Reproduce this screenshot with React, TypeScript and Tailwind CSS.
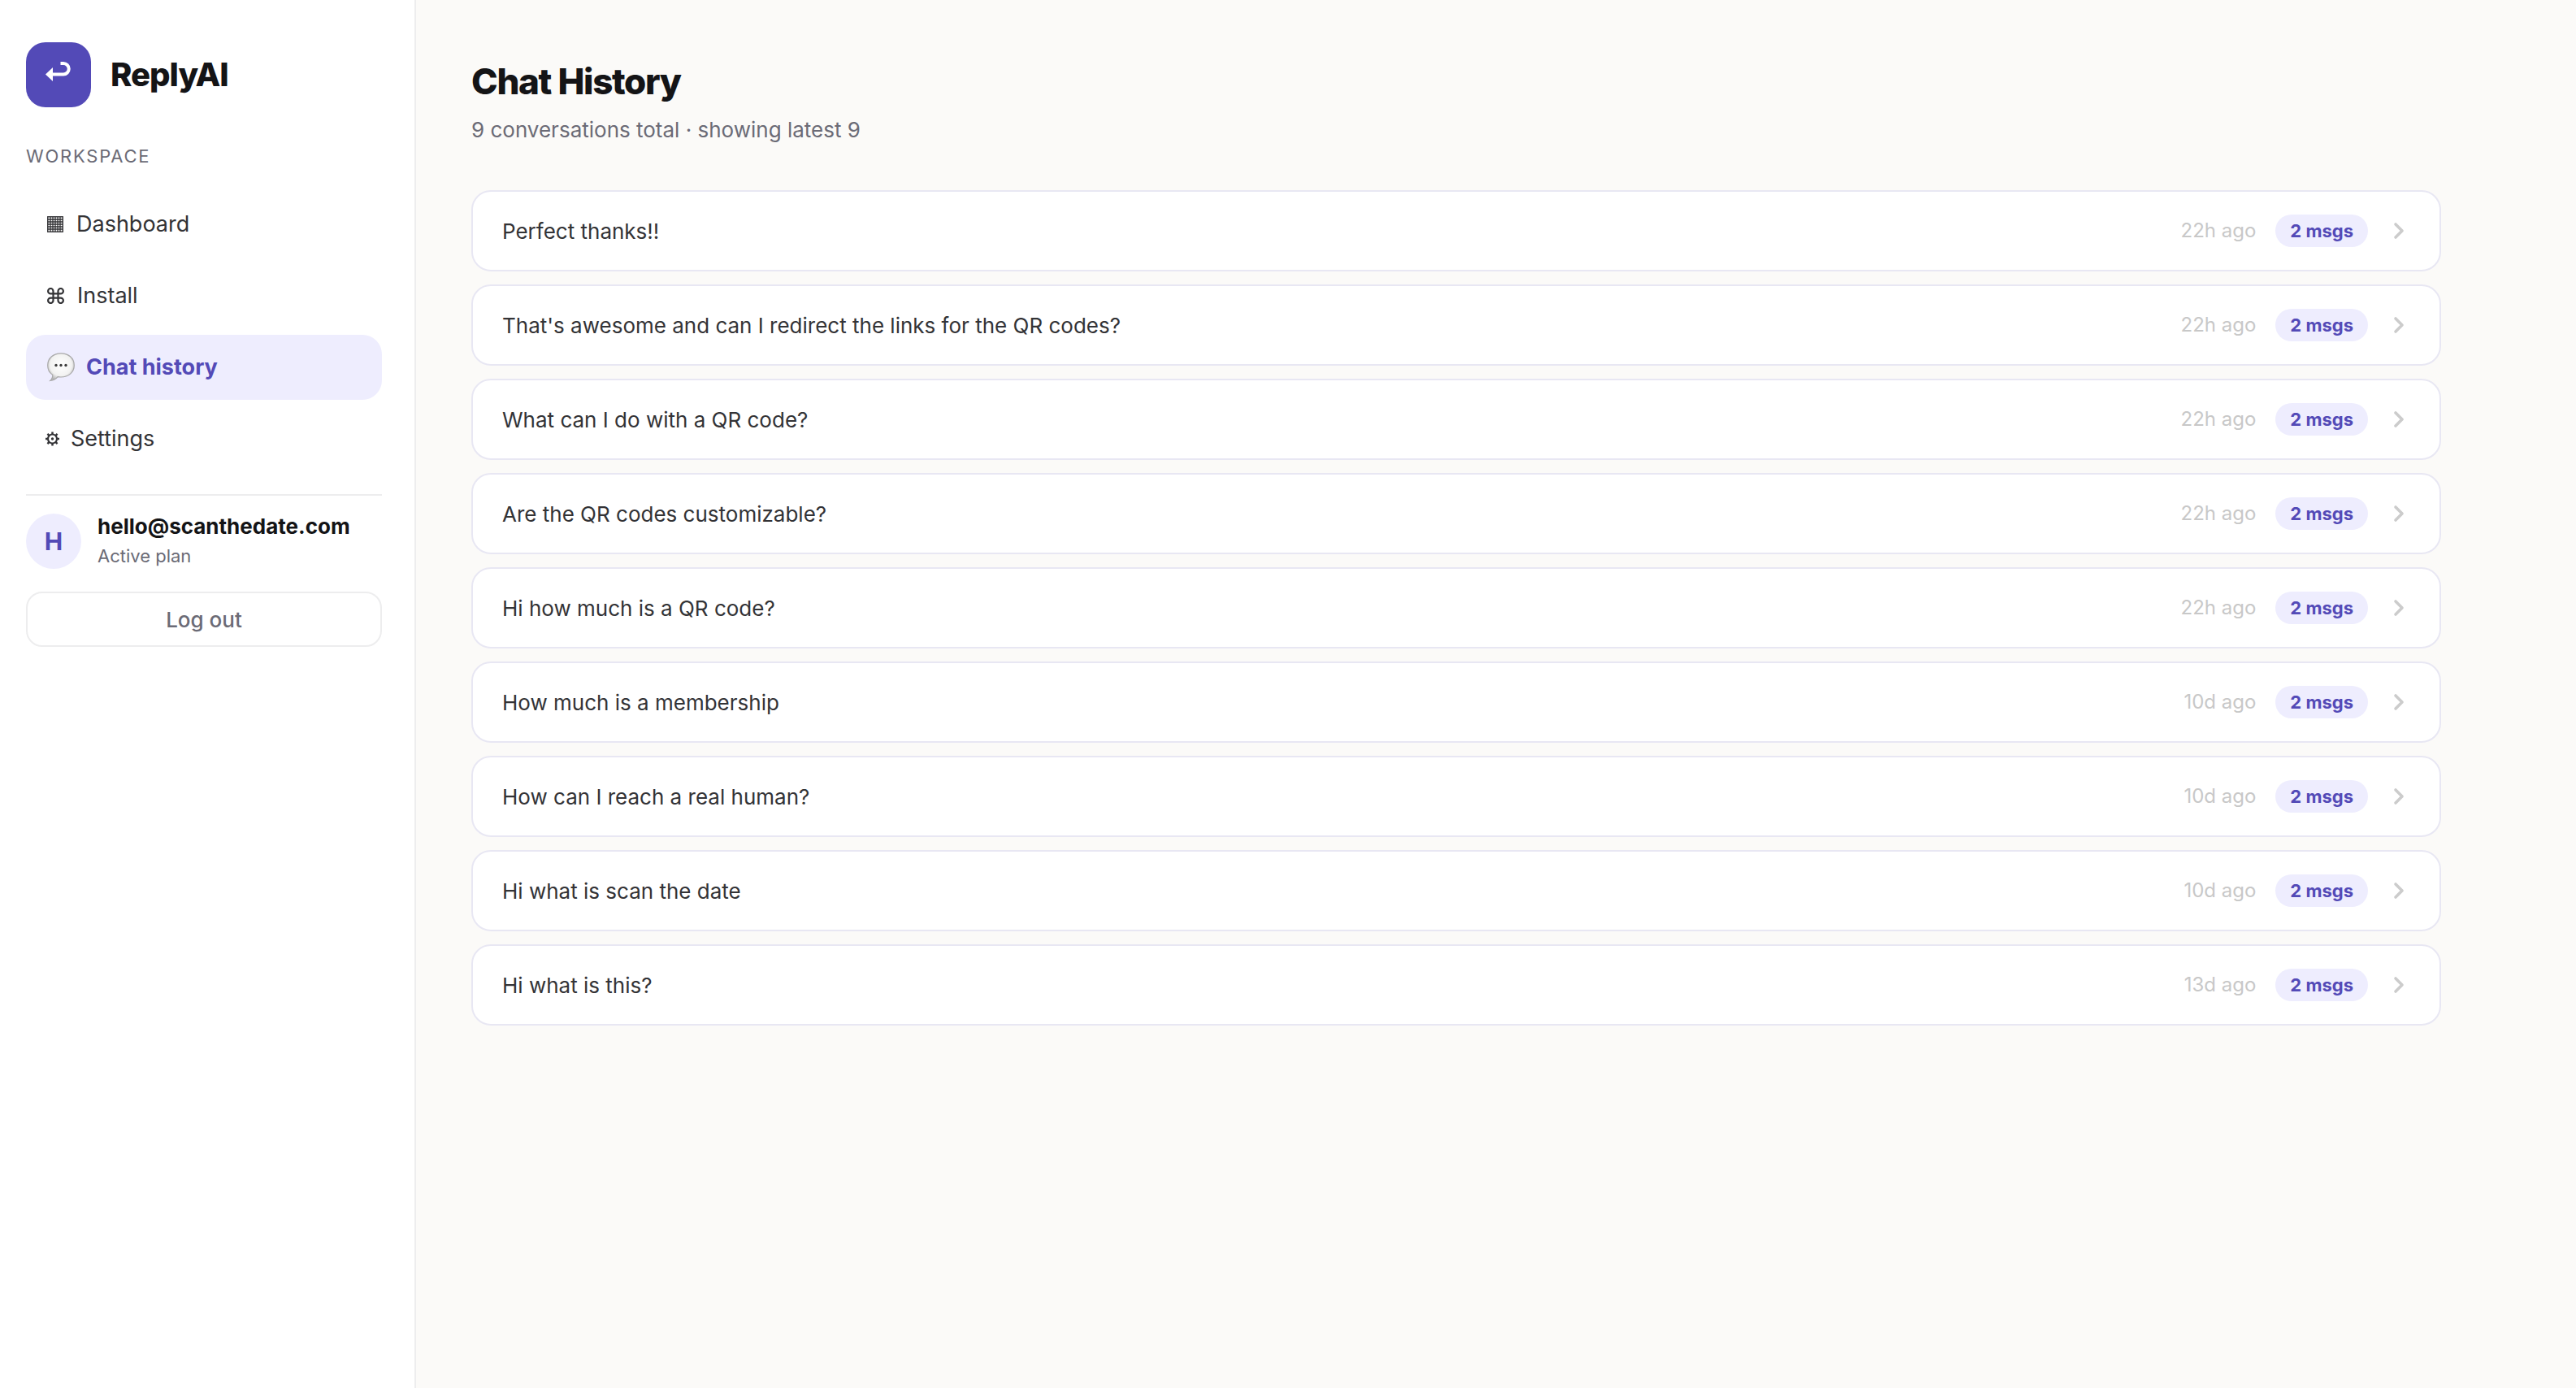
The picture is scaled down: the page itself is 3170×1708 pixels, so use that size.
import React from "react";

const BubbleIcon = () => (
  <svg width="34" height="36" viewBox="0 0 34 36" aria-hidden="true">
    <defs>
      <radialGradient id="bubble" cx="50%" cy="42%" r="58%">
        <stop offset="0%" stopColor="#ffffff" />
        <stop offset="70%" stopColor="#f2f2f1" />
        <stop offset="100%" stopColor="#b4b4b4" />
      </radialGradient>
    </defs>
    <path
      d="M17 .8C8 .8.7 6.600.7 15.500c0 6 2.500 9.500 6 11.700.3 3-.8 5.300-2.900 7.200 4.200-.4 7.200-2.200 9.300-4.800 1.200.3 2.600.4 3.900.4 9 0 16.300-5.600 16.300-14.500S26 .8 17 .8z"
      fill="url(#bubble)"
      stroke="#a9a9a9"
      strokeWidth="1.200"
    />
    <circle cx="11" cy="15.500" r="1.700" fill="#3c3c3c" />
    <circle cx="17" cy="15.500" r="1.700" fill="#3c3c3c" />
    <circle cx="23" cy="15.500" r="1.700" fill="#3c3c3c" />
  </svg>
);

const GridIcon = () => (
  <svg width="20" height="20" viewBox="0 0 20 20" stroke="currentColor" fill="none" aria-hidden="true">
    <rect x=".75" y=".75" width="18.500" height="18.500" strokeWidth="1.400" />
    <path d="M4 1v18M7 1v18M10 1v18M13 1v18M16 1v18M1 4h18M1 7h18M1 10h18M1 13h18M1 16h18" strokeWidth="1.300" />
  </svg>
);

const CommandIcon = () => (
  <svg width="21" height="20" viewBox="0 0 21 20" stroke="currentColor" fill="none" strokeWidth="2.200" aria-hidden="true">
    <path d="M7.500 4.200v11.600a3.200 3.200 0 1 1-3.200-3.200h12.400a3.200 3.200 0 1 1-3.200 3.200V4.200a3.200 3.200 0 1 1 3.200 3.200H4.300a3.200 3.200 0 1 1 3.200-3.200z" />
  </svg>
);

const GearIcon = () => (
  <svg width="17" height="18" viewBox="0 0 18 18" stroke="currentColor" fill="none" aria-hidden="true">
    <circle cx="9" cy="9" r="5.800" strokeWidth="2.200" />
    <circle cx="9" cy="9" r="1.800" fill="currentColor" stroke="none" />
    <path
      d="M9 0v3M9 15v3M0 9h3M15 9h3M2.600 2.600l2.200 2.200M13.200 13.200l2.200 2.200M2.600 15.400l2.200-2.200M13.200 4.800l2.200-2.200"
      strokeWidth="2.600"
    />
  </svg>
);

const navItems = [
  { label: "Dashboard", icon: <GridIcon />, spacing: "gap-4 pl-[26px]" },
  { label: "Install", icon: <CommandIcon />, spacing: "gap-4 pl-[26px]" },
  { label: "Chat history", icon: <BubbleIcon />, spacing: "gap-3.5 pl-[26px]", active: true },
  { label: "Settings", icon: <GearIcon />, spacing: "gap-3.5 pl-6" },
];

const conversations = [
  { text: "Perfect thanks!!", time: "22h ago" },
  { text: "That's awesome and can I redirect the links for the QR codes?", time: "22h ago" },
  { text: "What can I do with a QR code?", time: "22h ago" },
  { text: "Are the QR codes customizable?", time: "22h ago" },
  { text: "Hi how much is a QR code?", time: "22h ago" },
  { text: "How much is a membership", time: "10d ago" },
  { text: "How can I reach a real human?", time: "10d ago" },
  { text: "Hi what is scan the date", time: "10d ago" },
  { text: "Hi what is this?", time: "13d ago" },
];

const Sidebar = () => (
  <aside className="w-[512px] shrink-0 border-r-2 border-[#ededee] bg-white pt-[52px] pr-10 pl-8">
    <div className="flex items-center gap-6">
      <div className="flex size-20 items-center justify-center rounded-3xl bg-[#534ab7] pb-2">
        <svg width="32" height="26" viewBox="0 0 32 26" fill="none" aria-hidden="true">
          <path d="M8 16.500h14a6.750 6.750 0 0 0 0-13.500h-3.500" stroke="#fff" strokeWidth="4" />
          <path d="M0 16.500 9 8v17z" fill="#fff" />
        </svg>
      </div>
      <span className="text-[40px] leading-none font-extrabold tracking-tight text-[#141416]">ReplyAI</span>
    </div>

    <h2 className="mt-[46px] text-[22px] leading-7 tracking-[0.08em] text-[#6b6b76] uppercase">Workspace</h2>

    <nav className="mt-[30px] flex flex-col gap-2">
      {navItems.map((item) => (
        <a
          key={item.label}
          href="#"
          aria-current={item.active ? "page" : undefined}
          className={`flex h-20 items-center rounded-3xl text-[27px] ${item.spacing} ${
            item.active ? "bg-[#eeedfe] font-bold text-[#534ab7]" : "text-[#333336]"
          }`}
        >
          {item.icon}
          {item.label}
        </a>
      ))}
    </nav>

    <div className="mt-7 border-t-2 border-[#ededee] pt-[22px]">
      <div className="flex items-center gap-5">
        <div className="flex size-[68px] items-center justify-center rounded-full bg-[#eeedfe] text-[30px] font-bold text-[#534ab7]">
          H
        </div>
        <div>
          <p className="text-[26px] leading-8 font-bold text-[#141416]">hello@scanthedate.com</p>
          <p className="mt-1 text-[22px] leading-8 text-[#6b6b76]">Active plan</p>
        </div>
      </div>
      <button className="mt-7 h-[68px] w-full rounded-[20px] border-2 border-[#ededee] bg-white text-[26px] font-medium text-[#6b6b76]">
        Log out
      </button>
    </div>
  </aside>
);

const App = () => {
  return (
    <div className="flex min-h-screen bg-[#fbfaf8] font-['Inter','Liberation_Sans',sans-serif]">
      <Sidebar />
      <main className="max-w-[2560px] min-w-0 flex-1 px-[68px] pt-[72px] pb-20">
        <h1 className="text-[44px] leading-[56px] font-extrabold tracking-[-0.03em] text-[#141416]">Chat History</h1>
        <p className="mt-3.5 text-[26px] leading-9 text-[#6b6b76]">9 conversations total · showing latest 9</p>

        <ul className="mt-14 flex flex-col gap-4">
          {conversations.map((c) => (
            <li key={c.text}>
              <button className="flex h-[100px] w-full items-center gap-6 rounded-3xl border-2 border-[#e8e7f3] bg-white px-9 text-left">
                <span className="flex-1 truncate text-[26px] text-[#333336]">{c.text}</span>
                <span className="text-2xl text-[#c8c8c8]">{c.time}</span>
                <span className="flex h-10 items-center rounded-full bg-[#eeedfe] px-[18px] text-[22px] font-bold text-[#534ab7]">
                  2 msgs
                </span>
                <svg width="28" height="28" viewBox="0 0 14 14" fill="none" aria-hidden="true">
                  <path d="M5 3l4 4-4 4" stroke="#cccccc" strokeWidth="1.800" strokeLinecap="round" strokeLinejoin="round" />
                </svg>
              </button>
            </li>
          ))}
        </ul>
      </main>
    </div>
  );
};

export default App;
